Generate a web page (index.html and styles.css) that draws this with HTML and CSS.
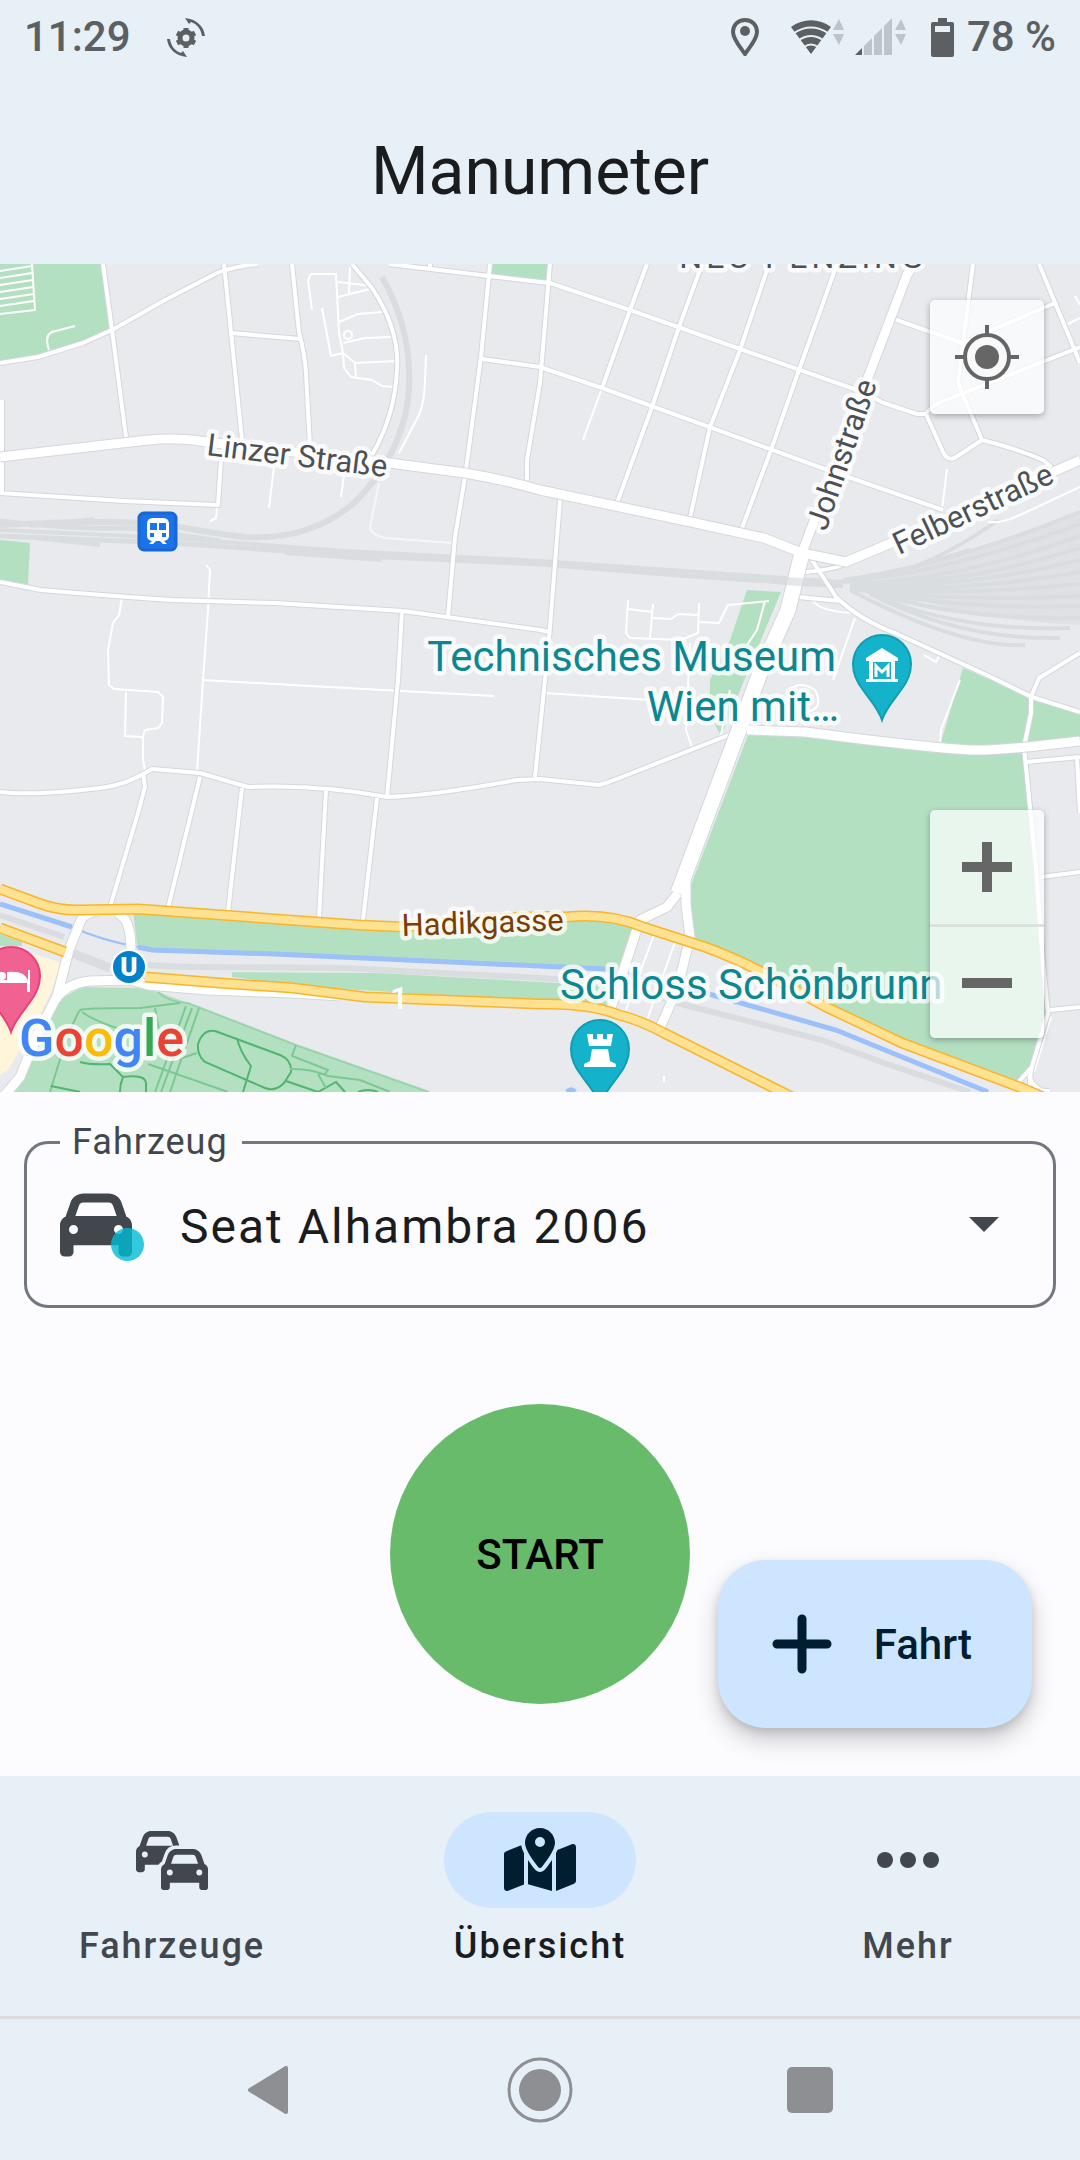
FILE: index.html
```html
<!DOCTYPE html>
<html lang="de">
<head>
    <meta charset="UTF-8">
    <meta name="viewport" content="width=device-width, initial-scale=1.0">
    <title>Manumeter</title>
    <link rel="stylesheet" href="styles.css">
</head>
<body>
    <div class="status-bar">
        <span class="status-text">11:29</span>
        <svg class="status-rotate" width="38" height="39" viewBox="0 0 38 39">
            <path d="M18 0c11 1 19 8 20 18h-3c-1-7-5-12-11-14l-2 2zM20 39C9 38 1 31 0 21h3c1 7 5 12 11 14l2-2z"/>
            <circle cx="19" cy="20" r="6" fill="none" stroke="#5c6062" stroke-width="5"/>
            <path d="M19 10v4M19 26v4M10 15l4 2M24 23l4 2M10 25l4-2M24 17l4-2" stroke="#5c6062" stroke-width="5"/>
        </svg>
        <div class="status-right">
            <svg width="28" height="38" viewBox="0 0 28 38">
                <path d="M14 2C7 2 2 7 2 14c0 7 7 15 12 22 5-7 12-15 12-22C26 7 21 2 14 2z" fill="none" stroke="#5c6062" stroke-width="4"/>
                <circle cx="14" cy="13" r="5"/>
            </svg>
            <svg class="status-wifi" width="54" height="38" viewBox="0 0 54 38">
                <path d="M20 36L0 9C12 0 28 0 40 9z"/>
                <path d="M3 15q17-11 34 0M8 22q12-8 24 0M13 29q7-5 14 0" fill="none" stroke="#e7eff7" stroke-width="2"/>
                <path class="faint" d="M42 12l6-11 5 11zM42 16h11l-5 11z"/>
            </svg>
            <svg class="status-signal" width="52" height="38" viewBox="0 0 52 38">
                <path d="M0 37h7v-7z"/>
                <path class="faint" d="M9 37h8V20l-8 8zM19 37h8V10l-8 8zM29 37h8V0l-8 8zM40 12l6-11 5 11zM40 16h11l-5 11z"/>
            </svg>
            <svg class="status-battery" width="24" height="39" viewBox="0 0 24 39">
                <path d="M7 0h9v4h5q2 0 2 2v31q0 2-2 2H2q-2 0-2-2V6q0-2 2-2h5zM4 8v6h15V8z" fill-rule="evenodd"/>
            </svg>
            <span class="status-text">78 %</span>
        </div>
    </div>

    <header class="title-bar">
        <h1>Manumeter</h1>
    </header>

    <section class="map" aria-label="Karte">
        <svg class="map-canvas" viewBox="0 264 1080 828" preserveAspectRatio="xMidYMid slice">
            <defs>
                <g id="streets">
                    <path d="M103 264L112 330L126 437"/>
                    <path d="M0 363L38 357L83 343L112 330L165 300L217 273Q235 266 258 264"/>
                    <path d="M224 264L231 332L242 440"/>
                    <path d="M292 264L299 332Q305 355 306 373L310 447"/>
                    <path d="M232 333L300 339"/>
                    <path d="M352 264L372 288Q400 330 397 370Q395 415 372 455"/>
                    <path d="M389 264L540 282L550 283L630 310L743 350L857 390L884 403L917 414H926Q930 406 946 400L1080 347"/>
                    <path d="M430 264v4"/>
                    <path d="M490 264L481 357L465 477L455 537L448 617"/>
                    <path d="M482 359L540 367L602 388L822 468L943 510"/>
                    <path d="M550 264L540 383L527 460V480"/>
                    <path d="M2 400V493M0 493L124 501L218 505L221 460"/>
                    <path d="M0 582L41 590Q110 596 172 600L275 603L403 611L540 630L550 632"/>
                    <path d="M402 611L398 680L387 797"/>
                    <path d="M647 264L630 310L602 388"/>
                    <path d="M702 264L679 327L652 407L617 503"/>
                    <path d="M769 264L740 350L710 427L690 518"/>
                    <path d="M837 264L799 370L771 450L742 528"/>
                    <path d="M894 319L962 343M962 343L1055 303"/>
                    <path d="M973 264L958 383L982 440Q1015 448 1043 460L1055 470"/>
                    <path d="M926 414L943 452Q948 462 956 457L982 440"/>
                    <path d="M1039 264L1080 363"/>
                    <path d="M560 500L550 627L545 680L535 777"/>
                    <path d="M812 560L836 597Q860 620 895 633L991 677L1032 697L1080 712"/>
                    <path d="M805 572Q830 570 843 565M798 597L840 601"/>
                    <path d="M1080 653L1039 678L1031 697V713L1024 747L1036 867L1043 963L1048 1013L1031 1070L1029 1092"/>
                    <path d="M1031 1068L1017 1084M1029 1075Q1034 1092 1050 1091"/>
                    <path d="M1026 762L1080 757M1077 758L1080 813M1041 877L1080 872M1050 1010L1080 1007"/>
                    <path d="M0 792Q34 796 100 788Q127 785 152 769L200 773L248 787Q320 784 387 797Q430 796 517 780L540 779L599 785L609 782L729 735"/>
                    <path d="M143 773L145 787L138 813L110 907M200 777L168 908M242 788L228 912M326 790L319 918M377 798L363 920"/>
                </g>
                <g id="avenues">
                    <path d="M0 457L148 440Q179 437 207 442L389 463L465 473Q505 480 540 490L691 522L764 538L802 553L846 562L891 543L1080 460"/>
                    <path d="M914 264L907 275L867 380L802 553"/>
                    <path d="M747 730L805 732Q920 747 970 750Q1000 751 1080 741"/>
                    <path d="M678 893L667 907L640 920L611 1008"/>
                    <path d="M686 880V905L690 937L678 987L660 1028"/>
                    <path d="M4 1096L20 1077L38 1033L55 1000Q65 984 90 981L130 980L148 985L207 990L293 993L340 996"/>
                    <path d="M56 1000L69 950L81 920Q86 912 98 911M117 913Q131 918 131 950"/>
                </g>
                <g id="johnstrasse">
                    <path d="M802 553L788 610L760 673L740 727L678 893"/>
                </g>
                <g id="highway">
                    <path d="M0 889L38 903Q60 911 80 910L138 909L358 925L403 927Q530 914 566 917Q610 913 643 927L705 947Q735 958 764 973L826 1007L902 1043L1022 1088L1050 1100"/>
                    <path d="M0 928L65 952M145 977L220 983L293 988L365 997L540 1004Q590 1003 619 1015Q640 1020 664 1033L712 1057L774 1088L800 1101"/>
                </g>
            </defs>

            <rect class="land" y="264" width="1080" height="828"/>

            <!-- parks -->
            <g class="park">
                <path d="M0 264H103L112 330L83 343L38 357L0 363z"/>
                <path d="M492 264H549V282L491 274z"/>
                <path d="M0 540L30 543L28 584L0 582z"/>
                <path d="M747 590L781 592L721 736L710 715V680L730 640z"/>
                <path d="M748 735L826 738L936 750L1022 752L1036 863L1048 1017L1031 1068L1017 1080L1000 1080L822 1003L695 940L688 893z"/>
                <path d="M963 668L941 742L988 749L1080 738V712L1031 697z"/>
                <path d="M133 910L358 925L540 920L609 920L640 928L619 972L540 965L275 954L152 948L137 945z"/>
                <path d="M232 972L379 973L540 982L617 987L609 1005L540 1001L310 987L232 977z"/>
                <path d="M0 934L22 942V946H0z"/>
                <path d="M14 1092L34 1057L55 1003L81 987L138 988L158 992L188 1003L296 1045L429 1092z"/>
            </g>
            <path class="sand" d="M0 947L22 950L62 963L52 990L38 1020L8 1070L0 1075z"/>

            <!-- paths in the palace gardens -->
            <g class="garden">
                <path d="M158 992Q170 1003 188 1003L296 1045L429 1092" opacity=".6"/>
                <path d="M80 1010Q84 1008 140 1008L180 1003M80 1010Q70 1025 50 1092M82 1012Q95 1022 130 1032M155 1008L160 1035M186 1006L155 1092M192 1008L161 1092M199 1008L170 1092"/>
                <path class="garden-dark" d="M215 1031L280 1055Q292 1060 291 1072L284 1083Q275 1092 265 1088L205 1062Q197 1055 198 1044Q203 1029 215 1031zM237 1038Q240 1052 251 1066L243 1092"/>
                <path class="garden-dark" d="M80 1062Q90 1065 110 1064L123 1077Q120 1084 120 1092M123 1077Q145 1074 146 1083V1092M51 1086L80 1092M286 1081L318 1092L336 1082L345 1092M358 1092Q368 1088 378 1092"/>
                <path d="M296 1045L292 1056L328 1070L325 1074H318M290 1069Q310 1068 328 1076L360 1080L390 1092M318 1074L326 1088M148 1064L228 1092M179 1059L197 1053"/>
            </g>

            <!-- railway -->
            <g class="rail">
                <path d="M0 525Q130 518 179 527Q225 535 245 537Q310 541 355 502Q400 457 408 400Q415 335 382 277" stroke-width="6"/>
                <path d="M0 521Q80 530 130 528L220 541M0 536L172 543L344 555L540 564L678 575L843 586" stroke-width="5"/>
                <path d="M0 530L172 538L344 551L540 561L843 582M30 526L94 519M15 536L100 545M285 553L382 560" stroke-width="4"/>
                <path d="M0 915L64 937M148 965Q180 967 200 967L344 968L540 978L620 984L685 1005L822 1040L884 1063L970 1092" stroke-width="6"/>
                <path d="M69 952L110 968" stroke-width="9"/>
            </g>
            <path class="yard" d="M870 583Q940 565 1080 510V625Q960 620 870 583z"/>
            <g class="rail" stroke-width="4">
                <path d="M843 580Q950 565 1080 512M843 582Q950 572 1080 524M850 584Q960 580 1080 536M850 585Q970 584 1080 548M850 586Q970 588 1080 560M850 588Q970 592 1080 572"/>
                <path d="M850 589Q960 596 1080 584M860 590Q960 602 1080 596M860 590Q960 610 1080 606M870 592Q960 620 1080 618M870 594Q960 632 1070 628M870 594Q960 640 1060 638M850 590Q960 648 1025 645"/>
                <path d="M900 572Q950 555 998 520M900 572L970 550"/>
            </g>

            <!-- river -->
            <path class="river" d="M0 904L72 927M138 947L152 950L275 954L540 966L605 969L695 990L836 1030L988 1092"/>
            <path class="river river-thin" d="M72 927Q100 940 138 947"/>

            <!-- footways and yards -->
            <g class="footway">
                <path d="M122 597L119 615L113 623L108 650L109 685L114 689L158 692L163 697L162 723L158 728L145 730L143 736V760L145 770M126 692L125 736L142 737"/>
                <path d="M217 507L216 518L210 521M206 565L210 570L208 610L203 680L197 772M203 680L310 686L494 696"/>
                <path d="M274 467L269 508M344 475L341 497M426 355L425 383Q424 405 418 417L399 453M390 463Q405 460 415 470"/>
                <path d="M379 483L370 527Q370 534 385 538L453 543" opacity=".6"/>
                <path d="M312 310L308 280L311 274H336L339 333L343 353L355 363L396 361M322 308L331 356L343 353L344 368L351 377L372 380L382 386L393 387M355 363L356 377"/>
                <path d="M338 282L372 286M338 297L370 289M339 322L358 314L382 312M343 343L365 338L391 337M350 267L349 293"/>
                <circle cx="348" cy="335" r="4"/>
                <path d="M32 264L35 310L0 314M0 271L32 266M0 278L32 273M0 285L33 280M0 292L33 287M0 299L34 294M0 306L34 301M75 326L52 332Q44 336 49 350"/>
                <path d="M628 600L626 633L630 638L681 640L698 633L699 603M628 609L653 612M653 604L650 638M653 618L671 619L678 614L699 615M699 622L719 623L728 605L769 601M765 601L757 630L747 645"/>
                <path d="M690 643L686 730L692 747M545 693L650 700M602 388L583 440M947 469L942 510M855 618L833 680M812 600Q820 612 855 613M988 522Q1001 524 1020 515L1080 487"/>
                <path d="M960 680L941 730L940 742M654 935L626 1010M675 942L647 1020M1051 1017L1034 1072M730 690L721 735M790 690Q800 680 815 690Q825 710 805 712"/>
                <path d="M1080 318L1068 324M1080 305L1075 296M924 655L936 662L940 655M664 1076v6"/>
            </g>

            <use href="#streets" class="street-case"/>
            <use href="#streets" class="street"/>
            <use href="#avenues" class="avenue-case"/>
            <use href="#johnstrasse" class="john-case"/>
            <use href="#avenues" class="avenue"/>
            <use href="#johnstrasse" class="john"/>
            <use href="#highway" class="highway-case"/>
            <use href="#highway" class="highway"/>
            <path class="rail" d="M775 580L812 583" stroke-width="8" opacity=".7"/>

            <!-- street names -->
            <g class="label">
                <text transform="translate(206 455) rotate(7)">Linzer Straße</text>
                <text transform="translate(826 532) rotate(-71)">Johnstraße</text>
                <text transform="translate(899 555) rotate(-25)">Felberstraße</text>
                <text class="label-district" x="803" y="268" text-anchor="middle">NEU PENZING</text>
                <text class="label-highway" transform="translate(402 936) rotate(-2)">Hadikgasse</text>
            </g>
            <text class="route-number" x="399" y="1009" text-anchor="middle">1</text>
            <g class="place">
                <text x="836" y="671" text-anchor="end">Technisches Museum</text>
                <text x="839" y="721" text-anchor="end">Wien mit…</text>
                <text x="560" y="999">Schloss Schönbrunn</text>
            </g>

            <!-- pins -->
            <g class="pin">
                <path d="M882 720C878 708 870 700 863 690C856 681 853 674 853 664A29 29 0 0 1 911 664C911 674 908 681 901 690C894 700 886 708 882 720z"/>
                <path class="pin-glyph" d="M866 658L882 648L898 658V661H895V679H898V682H866V679H869V661H866zM873 662V679H891V662z" fill-rule="evenodd"/>
                <path d="M876 677V666L882 672L888 666V677" fill="none" stroke="#fff" stroke-width="3"/>
            </g>
            <g class="pin">
                <path d="M600 1105C596 1093 588 1085 581 1075C574 1066 571 1059 571 1049A29 29 0 0 1 629 1049C629 1059 626 1066 619 1075C612 1085 604 1093 600 1105z"/>
                <path class="pin-glyph" d="M587 1034H593V1039H597V1034H603V1039H607V1034H613L611 1046H589zM592 1049H608L610 1061L616 1064V1067H584V1064L590 1061z"/>
            </g>
            <path class="river" d="M567 1092q4-4 8 0"/>
            <g class="pin pin-hotel">
                <path d="M11 1032C7 1020 -1 1012 -8 1002C-15 993 -18 986 -18 976A29 29 0 0 1 40 976C40 986 37 993 30 1002C23 1012 15 1020 11 1032z"/>
                <path class="pin-glyph" d="M-8 980H7V972Q24 970 28 980V970H30V992H27V983H-8z"/>
                <circle class="pin-glyph" cx="2" cy="976" r="4"/>
            </g>

            <g>
                <rect x="139" y="513" width="37" height="37" rx="5" fill="#1a73e8" stroke="#1967d2" stroke-width="3"/>
                <path d="M153 518H163Q169 518 169 524V536Q169 540 164 541L167 544H163L160 541H156L153 544H149L152 541Q147 540 147 536V524Q147 518 153 518zM150 523V530H157V523zM159 523V530H166V523z" fill="#fff" fill-rule="evenodd"/>
                <path d="M150 535h4M162 535h4" stroke="#1a73e8" stroke-width="4"/>
            </g>
            <g>
                <circle cx="129" cy="967" r="18" fill="#fff"/>
                <circle cx="129" cy="967" r="16" fill="#0081c9"/>
                <text class="metro" x="129" y="976" text-anchor="middle">U</text>
            </g>

            <text class="google" x="19" y="1056"><tspan fill="#4285f4">G</tspan><tspan fill="#ea4335">o</tspan><tspan fill="#fbbc04">o</tspan><tspan fill="#4285f4">g</tspan><tspan fill="#34a853">l</tspan><tspan fill="#ea4335">e</tspan></text>
        </svg>

        <div class="map-control map-locate">
            <button type="button" aria-label="Mein Standort">
                <svg width="64" height="64" viewBox="0 0 64 64">
                    <circle cx="32" cy="32" r="22" fill="none" stroke="#666" stroke-width="4"/>
                    <circle cx="32" cy="32" r="12" fill="#666"/>
                    <path d="M32 0v9M32 55v9M0 32h9M55 32h9" stroke="#666" stroke-width="4"/>
                </svg>
            </button>
        </div>
        <div class="map-control map-zoom">
            <button type="button" aria-label="Vergrößern">
                <svg width="50" height="50" viewBox="0 0 50 50"><path d="M0 25h50M25 0v50" stroke="#666" stroke-width="10"/></svg>
            </button>
            <button type="button" aria-label="Verkleinern">
                <svg width="50" height="50" viewBox="0 0 50 50"><path d="M0 25h50" stroke="#666" stroke-width="10"/></svg>
            </button>
        </div>
    </section>

    <main class="panel">
        <fieldset class="vehicle">
            <legend><label for="vehicle">Fahrzeug</label></legend>
            <div class="vehicle-row">
                <span class="vehicle-icon">
                    <svg width="72" height="72" viewBox="0 0 512 512" fill="#42474e">
                        <path d="M135.2 117.4L109.1 192H402.9l-26.1-74.6C372.3 104.6 360.2 96 346.6 96H165.4c-13.6 0-25.7 8.6-30.2 21.4zM39.6 196.8L74.8 96.3C88.3 57.8 124.6 32 165.4 32H346.6c40.8 0 77.1 25.8 90.6 64.3l35.2 100.5c23.2 9.6 39.6 32.5 39.6 59.2V400v48c0 17.7-14.3 32-32 32H448c-17.7 0-32-14.3-32-32V400H96v48c0 17.7-14.3 32-32 32H32c-17.7 0-32-14.3-32-32V400 256c0-26.7 16.4-49.6 39.6-59.2zM128 288a32 32 0 1 0 -64 0 32 32 0 1 0 64 0zm288 32a32 32 0 1 0 0-64 32 32 0 1 0 0 64z"/>
                    </svg>
                    <span class="vehicle-dot"></span>
                </span>
                <select id="vehicle">
                    <option>Seat Alhambra 2006</option>
                </select>
                <svg class="vehicle-caret" width="30" height="15" viewBox="0 0 30 15"><path d="M0 0h30L15 15z" fill="#42474e"/></svg>
            </div>
        </fieldset>

        <button type="button" class="start">START</button>

        <button type="button" class="fab">
            <svg width="60" height="60" viewBox="0 0 60 60"><path d="M5 30h50M30 5v50" stroke="#001e30" stroke-width="9" stroke-linecap="round"/></svg>
            Fahrt
        </button>
    </main>

    <nav class="tabs">
        <a href="#fahrzeuge" class="tab">
            <span class="tab-icon">
                <svg width="72" height="60" viewBox="0 0 72 60">
                    <defs>
                        <path id="car" d="M135.2 117.4L109.1 192H402.9l-26.1-74.6C372.3 104.6 360.2 96 346.6 96H165.4c-13.6 0-25.7 8.6-30.2 21.4zM39.6 196.8L74.8 96.3C88.3 57.8 124.6 32 165.4 32H346.6c40.8 0 77.1 25.8 90.6 64.3l35.2 100.5c23.2 9.6 39.6 32.5 39.6 59.2V400v48c0 17.7-14.3 32-32 32H448c-17.7 0-32-14.3-32-32V400H96v48c0 17.7-14.3 32-32 32H32c-17.7 0-32-14.3-32-32V400 256c0-26.7 16.4-49.6 39.6-59.2zM128 288a32 32 0 1 0 -64 0 32 32 0 1 0 64 0zm288 32a32 32 0 1 0 0-64 32 32 0 1 0 0 64z"/>
                    </defs>
                    <use href="#car" transform="translate(0 -2) scale(.092)"/>
                    <path d="M0 480V256q0-45 40-60L75 96Q95 32 165 32H347Q417 32 437 96L472 196Q512 212 512 256V480z" transform="translate(25 16) scale(.092)" fill="#e7eff7" stroke="#e7eff7" stroke-width="76"/>
                    <use href="#car" transform="translate(25 16) scale(.092)"/>
                </svg>
            </span>
            Fahrzeuge
        </a>
        <a href="#uebersicht" class="tab tab-active" aria-current="page">
            <span class="tab-icon">
                <svg width="72" height="64" viewBox="0 0 576 512">
                    <path d="M408 120c0 54.6-73.1 151.9-105.2 192c-7.7 9.6-22 9.6-29.6 0C241.1 271.9 168 174.6 168 120C168 53.7 221.7 0 288 0s120 53.7 120 120zm8 80.4c3.5-6.9 6.7-13.8 9.6-20.6c.5-1.2 1-2.5 1.5-3.7l116-46.4C558.9 123.4 576 135 576 152V422.8c0 9.8-6 18.6-15.1 22.3L416 503V200.4zM137.6 138.3c2.4 14.1 7.2 28.3 12.8 41.5c2.9 6.8 6.1 13.7 9.6 20.6V451.8L32.9 502.7C17.1 509 0 497.4 0 480.4V209.6c0-9.8 6-18.6 15.1-22.3l122.6-49zM327.8 332c13.9-17.4 35.7-45.7 56.2-77V504.3L192 449.4V255c20.5 31.3 42.3 59.6 56.2 77c20.5 25.6 59.1 25.6 79.6 0zM288 152a40 40 0 1 0 0-80 40 40 0 1 0 0 80z"/>
                </svg>
            </span>
            Übersicht
        </a>
        <a href="#mehr" class="tab">
            <span class="tab-icon">
                <svg width="62" height="16" viewBox="0 0 62 16"><circle cx="8" cy="8" r="8"/><circle cx="31" cy="8" r="8"/><circle cx="54" cy="8" r="8"/></svg>
            </span>
            Mehr
        </a>
    </nav>

    <div class="system-nav">
        <button type="button" aria-label="Zurück">
            <svg width="48" height="48" viewBox="0 0 48 48"><path d="M4 24L40 2V46z" stroke="#8e8f93" stroke-width="4" stroke-linejoin="round"/></svg>
        </button>
        <button type="button" aria-label="Startseite">
            <svg width="66" height="66" viewBox="0 0 66 66"><circle cx="33" cy="33" r="21"/><circle cx="33" cy="33" r="31" fill="none" stroke="#8e8f93" stroke-width="3"/></svg>
        </button>
        <button type="button" aria-label="Letzte Apps">
            <svg width="46" height="46" viewBox="0 0 46 46"><rect width="46" height="46" rx="5"/></svg>
        </button>
    </div>
</body>
</html>
```
FILE: styles.css
```css
*{
    box-sizing: border-box;
}

body{
    margin: 0;
    min-height: 100vh;
    display: flex;
    flex-direction: column;
    background-color: #fcfcff;
    color: #1a1c1e;
    font-family: Roboto, sans-serif;
}

button, select{
    font-family: inherit;
    border: none;
    margin: 0;
    padding: 0;
    background: none;
    color: inherit;
}

/* status bar + title */
.status-bar{
    height: 72px;
    padding: 2px 24px 0;
    display: flex;
    align-items: center;
    background-color: #e7eff7;
    color: #5c6062;
    fill: #5c6062;
}

.status-text{
    font-size: 42px;
    font-weight: 500;
    line-height: 72px;
}

.status-rotate{
    margin-left: 36px;
}

.status-right{
    margin-left: auto;
    display: flex;
    align-items: center;
}

.status-wifi{
    margin-left: 32px;
}

.status-signal{
    margin-left: 10px;
}

.status-battery{
    margin-left: 24px;
    margin-right: 12px;
}

.faint{
    fill: #bdc4cb;
}

.title-bar{
    height: 192px;
    padding-top: 8px;
    display: flex;
    align-items: center;
    justify-content: center;
    background-color: #e7eff7;
}

.title-bar h1{
    margin: 0;
    font-size: 66px;
    font-weight: 400;
    line-height: 84px;
}

/* map */
.map{
    position: relative;
    overflow: hidden;
}

.map-canvas{
    display: block;
    width: 100%;
    height: auto;
}

.land{ fill: #e8eaed; }
.park{ fill: #b4e0c2; }
.sand{ fill: #fef5db; }

.garden{
    fill: none;
    stroke: #7cc893;
    stroke-width: 2;
}

.garden-dark{
    stroke: #4fb56f;
}

.rail{
    fill: none;
    stroke: #dadde0;
}

.yard{
    fill: #dfe1e4;
}

.river{
    fill: none;
    stroke: #9cc0f9;
    stroke-width: 5;
}

.river-thin{
    stroke-width: 2;
}

.footway{
    fill: none;
    stroke: #fff;
    stroke-width: 2;
    stroke-linejoin: round;
}

.street-case, .street, .avenue-case, .avenue, .john-case, .john, .highway-case, .highway{
    fill: none;
    stroke-linejoin: round;
}

.street-case{ stroke: #d5d7dc; stroke-width: 6; }
.street{ stroke: #fff; stroke-width: 4; }
.avenue-case{ stroke: #d5d7dc; stroke-width: 11; }
.avenue{ stroke: #fff; stroke-width: 9; }
.john-case{ stroke: #d5d7dc; stroke-width: 17; }
.john{ stroke: #fff; stroke-width: 15; }
.highway-case{ stroke: #f9b52b; stroke-width: 11; }
.highway{ stroke: #fee191; stroke-width: 8; }

.label text, .place text, .google{
    paint-order: stroke;
    stroke: rgba(255, 255, 255, 0.8);
    stroke-width: 9px;
    stroke-linejoin: round;
}

.label text{
    font-size: 31px;
    fill: #4d5156;
}

.label .label-highway{
    fill: #7b3d05;
}

.label .label-district{
    font-size: 32px;
    letter-spacing: 4px;
}

.place text{
    font-size: 42px;
    fill: #0b8792;
}

.route-number{
    font-size: 32px;
    font-weight: 500;
    fill: #fff;
}

.metro{
    font-size: 26px;
    font-weight: 900;
    fill: #fff;
}

.google{
    font-size: 52px;
    font-weight: 500;
}

.pin{
    fill: #15b2cb;
    stroke: #129eaf;
    stroke-width: 2;
}

.pin-hotel{
    fill: #f06292;
    stroke: #ea4079;
}

.pin-glyph{
    fill: #fff;
    stroke: none;
}

.map-control{
    position: absolute;
    right: 36px;
    display: flex;
    flex-direction: column;
    width: 114px;
    border-radius: 5px;
    background-color: rgba(255, 255, 255, 0.7);
    box-shadow: 0 2px 6px rgba(0, 0, 0, 0.3);
}

.map-control button{
    height: 114px;
    display: flex;
    align-items: center;
    justify-content: center;
}

.map-control button + button{
    border-top: 3px solid #d9e3dc;
}

.map-locate{
    top: 36px;
}

.map-zoom{
    bottom: 54px;
}

/* vehicle + start */
.panel{
    flex: 1;
    position: relative;
    display: flex;
    flex-direction: column;
    padding: 32px 24px 72px;
}

.vehicle{
    margin: 0;
    padding: 0 48px 0 33px;
    border: 3px solid #73777f;
    border-radius: 24px;
}

.vehicle legend{
    padding: 0 14px 0 12px;
    font-size: 36px;
    line-height: 36px;
    letter-spacing: 1px;
    color: #42474e;
}

.vehicle-row{
    display: flex;
    align-items: center;
    height: 145px;
    padding-bottom: 16px;
}

.vehicle-icon{
    position: relative;
    display: flex;
}

.vehicle-dot{
    position: absolute;
    right: -12px;
    bottom: 0;
    width: 33px;
    height: 33px;
    border-radius: 50%;
    background-color: rgba(0, 188, 212, 0.8);
}

.vehicle select{
    flex: 1;
    appearance: none;
    margin-left: 48px;
    padding-top: 4px;
    font-size: 48px;
    line-height: 72px;
    letter-spacing: 2px;
}

.vehicle-caret{
    margin-right: 6px;
}

.start{
    align-self: center;
    width: 300px;
    height: 300px;
    margin-top: 96px;
    border-radius: 50%;
    background-color: #67bb6b;
    color: #000;
    font-size: 42px;
    font-weight: 500;
}

.fab{
    position: absolute;
    right: 48px;
    bottom: 48px;
    height: 168px;
    padding: 0 60px 0 54px;
    display: flex;
    align-items: center;
    gap: 42px;
    border-radius: 48px;
    background-color: #cde5ff;
    color: #001e30;
    font-size: 42px;
    font-weight: 500;
    box-shadow: 0 12px 24px rgba(0, 0, 0, 0.2), 0 4px 8px rgba(0, 0, 0, 0.12);
}

/* bottom navigation */
.tabs{
    height: 240px;
    display: grid;
    grid-template-columns: repeat(3, 1fr);
    gap: 24px;
    background-color: #e7eff7;
}

.tab{
    padding-top: 36px;
    display: flex;
    flex-direction: column;
    align-items: center;
    gap: 14px;
    color: #42474e;
    fill: #42474e;
    font-size: 36px;
    font-weight: 500;
    line-height: 48px;
    letter-spacing: 2px;
    text-decoration: none;
}

.tab-icon{
    width: 192px;
    height: 96px;
    display: flex;
    align-items: center;
    justify-content: center;
    border-radius: 48px;
}

.tab-active{
    color: #1a1c1e;
    fill: #001e30;
}

.tab-active .tab-icon{
    background-color: #cde5ff;
}

.system-nav{
    height: 144px;
    border-top: 3px solid #dcdcde;
    display: grid;
    grid-template-columns: repeat(3, 25%);
    justify-content: center;
    background-color: #e7eff7;
    fill: #8e8f93;
}

.system-nav button{
    display: flex;
    align-items: center;
    justify-content: center;
}
```
